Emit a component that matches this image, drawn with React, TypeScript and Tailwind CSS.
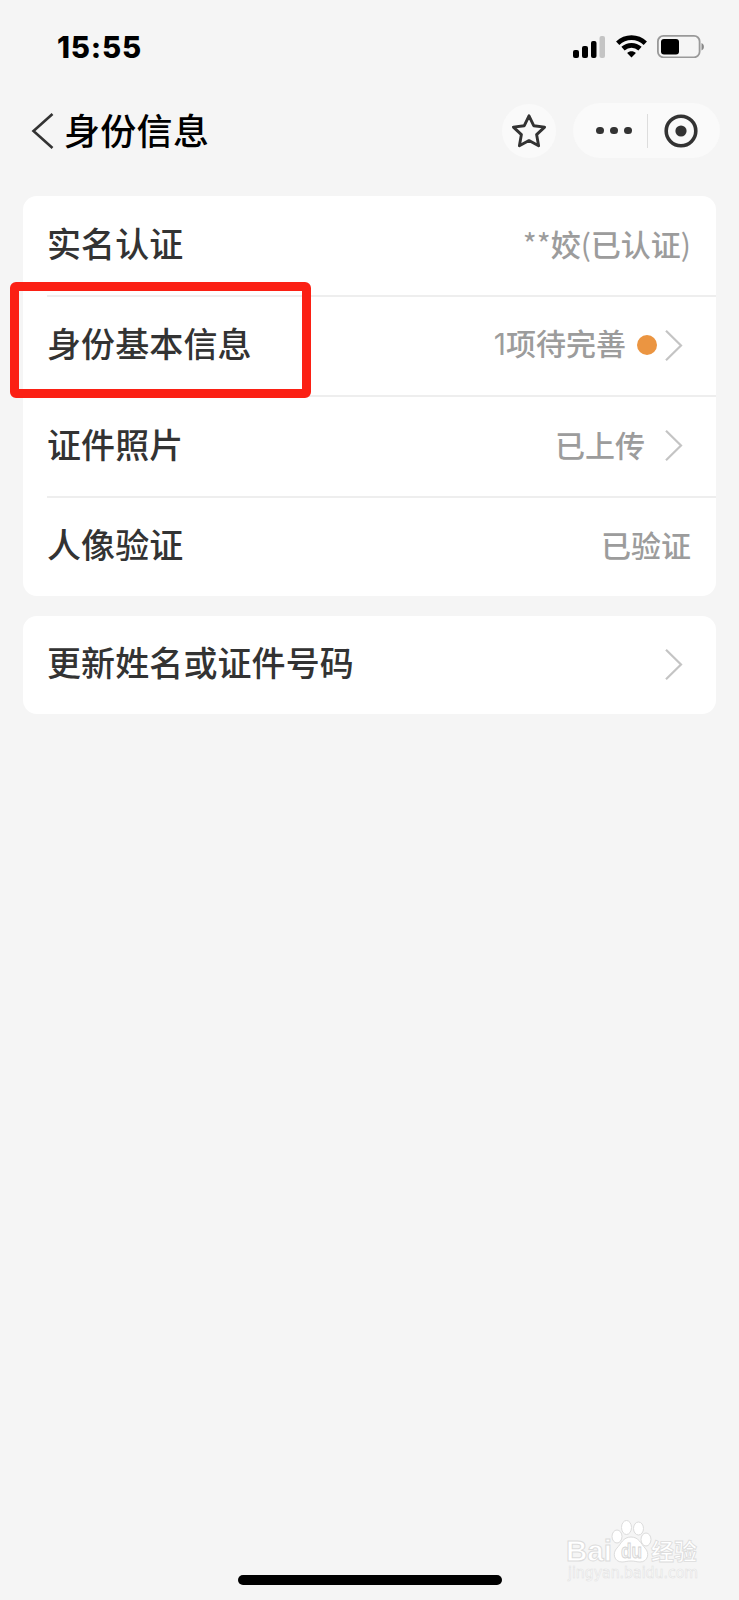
import { ReactNode } from "react";

const cjk = "font-['Noto_Sans_CJK_SC',sans-serif]";

function StatusBar() {
	return (
		<div className="flex h-[94px] justify-between pl-[57px] pr-[34px] pt-[29px]">
			<div className="h-9 font-['Inter',sans-serif] text-[29.5px] leading-9 font-extrabold tracking-[0.8px] text-black">15:55</div>

			<div className="flex h-[35px] items-center">
				<svg width="32" height="22" viewBox="0 0 32 22">
					<rect x="0" y="14" width="6" height="8" rx="2" />
					<rect x="9" y="10" width="6" height="12" rx="2" />
					<rect x="18" y="5" width="5.5" height="17" rx="2" />
					<rect x="26.5" y="0" width="5.5" height="22" rx="2" fill="#c4c4c4" />
				</svg>
				<svg width="31" height="23" viewBox="0 0 31 23" className="ml-[11px]" fill="none" stroke="#000" strokeWidth="4.8">
					<path d="M1.7 8.2C9.6.8 21.4.8 29.3 8.2" />
					<path d="M7 13.6c4.9-4.4 12.1-4.4 17 0" />
					<path d="M15.5 22.5l-4.4-4.5c2.4-2.2 6.4-2.2 8.8 0z" fill="#000" stroke="none" />
				</svg>
				<svg width="48" height="23" viewBox="0 0 48 23" className="ml-[10.5px]">
					<rect x="0.9" y="0.9" width="41.7" height="21.4" rx="5.5" fill="none" stroke="#999" strokeWidth="1.8" />
					<rect x="4" y="4" width="18" height="15.5" rx="3" />
					<path d="M44.5 8v7.5c3.2-1.4 3.2-6.1 0-7.5z" fill="#888" />
				</svg>
			</div>
		</div>
	);
}

function NavBar() {
	return (
		<div className="flex h-[102px] items-start justify-between pl-[31px] pr-[19px]">
			<div className="flex h-[73px] items-center">
				<svg width="23" height="36" viewBox="0 0 23 36" fill="none" stroke="#333" strokeWidth="2.6">
					<path d="M21.5 1L2.5 18l19 17" />
				</svg>
				<h1 className={`${cjk} ml-[10px] pb-[4px] text-[36px] leading-[52px] font-medium tracking-[0.3px] text-black`}>身份信息</h1>
			</div>

			<div className="flex h-[73px] items-center">
				<div className="mr-[17px] flex size-[54px] items-center justify-center rounded-full bg-[#fafafa]">
					<svg width="36" height="36" viewBox="0 0 36 36" fill="none" stroke="#333" strokeWidth="2.9" strokeLinejoin="round">
						<path d="M18 2.8l4.7 9.9 10.9 1.4-8 7.5 2 11.2L18 27.6l-9.6 5.2 2-11.2-8-7.5 10.9-1.4z" />
					</svg>
				</div>
				<div className="flex h-[55px] w-[147px] items-center rounded-full bg-[#fafafa]">
					<div className="flex w-[74px] items-center gap-[6.5px] pl-[23px]">
						<span className="size-[7.5px] rounded-full bg-[#333]" />
						<span className="size-[7.5px] rounded-full bg-[#333]" />
						<span className="size-[7.5px] rounded-full bg-[#333]" />
					</div>
					<div className="h-[34px] w-px bg-[#ddd]" />
					<svg width="34" height="34" viewBox="0 0 34 34" className="ml-4">
						<circle cx="17" cy="17" r="14.8" fill="none" stroke="#333" strokeWidth="3.6" />
						<circle cx="17" cy="17" r="5.6" fill="#333" />
					</svg>
				</div>
			</div>
		</div>
	);
}

function Chevron() {
	return (
		<svg width="18" height="31" viewBox="0 0 18 31" fill="none" stroke="#c4c4c4" strokeWidth="2.2">
			<path d="M1 .8l15 14.7-15 14.7" />
		</svg>
	);
}

type RowProps = {
	label: string;
	value?: ReactNode;
	dot?: boolean;
	arrow?: boolean;
	last?: boolean;
	children?: ReactNode;
};

function Row({ label, value, dot, arrow, last, children }: RowProps) {
	return (
		<div className={`relative ml-6 flex flex-1 items-center justify-between pb-px ${last ? "" : "border-b-2 border-[#eeeeee]"} ${arrow ? "pr-[33px]" : "pr-[25px]"}`}>
			<span className={`${cjk} pb-[4px] text-[34px] leading-[50px] font-medium tracking-[0.1px] text-[#333]`}>{label}</span>
			<div className="flex items-center">
				{value && <span className={`${cjk} pb-[4px] text-[30px] leading-[44px] font-medium text-[#9c9c9c]`}>{value}</span>}
				{dot && <span className="ml-[11px] size-5 rounded-full bg-[#eb9541]" />}
				{arrow && <div className={dot ? "ml-2" : "ml-5"}><Chevron /></div>}
			</div>
			{children}
		</div>
	);
}

function Watermark() {
	return (
		<svg width="140" height="76" viewBox="0 0 140 76" className="absolute right-[35px] bottom-[8px] overflow-visible" fill="#fff" stroke="#dcdcdc" strokeWidth="1">
			<text x="2" y="45" fontSize="30" fontWeight="700" fontFamily="Liberation Sans, sans-serif" textLength="46" lengthAdjust="spacingAndGlyphs">Bai</text>
			<ellipse cx="53" cy="20.5" rx="5" ry="6.5" />
			<ellipse cx="62.5" cy="11.5" rx="5" ry="7" />
			<ellipse cx="74.5" cy="12.5" rx="5" ry="6.5" />
			<ellipse cx="82" cy="23.5" rx="5" ry="6.5" />
			<path d="M67 21c-8 0-10 7-14 11-5 5-3 14 5 14 3 0 5-1 9-1s6 1 9 1c8 0 10-9 5-14-4-4-6-11-14-11z" />
			<text x="57" y="42" fontSize="20" fontWeight="700" fill="#f7f7f7" stroke="#d2d2d2" strokeWidth="0.8" fontFamily="Liberation Sans, sans-serif" textLength="21" lengthAdjust="spacingAndGlyphs">du</text>
			<text x="87" y="44" fontSize="23" fontWeight="700" strokeWidth="0.8" fontFamily="Noto Sans CJK SC, sans-serif">经验</text>
			<text x="4" y="62" fontSize="15" fill="#fefefe" stroke="#e2e2e2" strokeWidth="0.6" fontFamily="DejaVu Sans, sans-serif" textLength="130" lengthAdjust="spacingAndGlyphs">jingyan.baidu.com</text>
		</svg>
	);
}

export default function App() {
	return (
		<div className="relative flex h-[1600px] w-[739px] flex-col bg-[#f5f5f5]">
			<StatusBar />
			<NavBar />

			<main className="flex flex-1 flex-col gap-[19.5px] px-[23px]">
				<section className="flex h-[400px] flex-col rounded-[14px] bg-white">
					<Row label="实名认证" value={<><span className="font-normal">**</span>姣<span className="font-normal">(</span>已认证<span className="font-normal">)</span></>} />
					<Row label="身份基本信息" value={<><span className="font-['Inter',sans-serif] font-normal">1</span>项待完善</>} dot arrow>
						<div className="absolute -top-[14.5px] -left-[37px] h-[116px] w-[301px] rounded-[6px] border-[9px] border-[#fb2014]" />
					</Row>
					<Row label="证件照片" value="已上传" arrow />
					<Row label="人像验证" value="已验证" last />
				</section>

				<section className="flex h-[98px] flex-col rounded-[14px] bg-white">
					<Row label="更新姓名或证件号码" arrow last />
				</section>
			</main>

			<Watermark />
			<div className="mb-[15px] h-[10px] w-[264px] self-center rounded-full bg-black" />
		</div>
	);
}
